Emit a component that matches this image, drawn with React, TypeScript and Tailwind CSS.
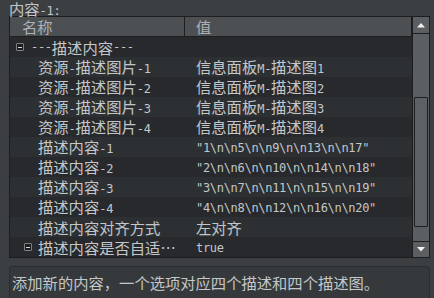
import React from 'react';

type Row = { name: string; value: string; kind?: 'group' | 'branch' };

const rows: Row[] = [
  { name: '---描述内容---', value: '', kind: 'group' },
  { name: '资源-描述图片-1', value: '信息面板M-描述图1' },
  { name: '资源-描述图片-2', value: '信息面板M-描述图2' },
  { name: '资源-描述图片-3', value: '信息面板M-描述图3' },
  { name: '资源-描述图片-4', value: '信息面板M-描述图4' },
  { name: '描述内容-1', value: '"1\\n\\n5\\n\\n9\\n\\n13\\n\\n17"' },
  { name: '描述内容-2', value: '"2\\n\\n6\\n\\n10\\n\\n14\\n\\n18"' },
  { name: '描述内容-3', value: '"3\\n\\n7\\n\\n11\\n\\n15\\n\\n19"' },
  { name: '描述内容-4', value: '"4\\n\\n8\\n\\n12\\n\\n16\\n\\n20"' },
  { name: '描述内容对齐方式', value: '左对齐' },
  { name: '描述内容是否自适…', value: 'true', kind: 'branch' },
];

// latin runs are drawn in a smaller mono face, CJK runs in Noto CJK
function Mixed({ text }: { text: string }) {
  const parts = text.match(/[\x20-\x7e]+|[^\x20-\x7e]+/g) ?? [];
  return (
    <>
      {parts.map((p, i) =>
        /^[\x20-\x7e]/.test(p) ? (
          <span key={i} className="font-['DejaVu_Sans_Mono',monospace] text-[12px] tracking-[-0.3px]">
            {p}
          </span>
        ) : (
          <span key={i} className="font-['Noto_Sans_CJK_SC',sans-serif] text-[15.3px]">
            {p}
          </span>
        )
      )}
    </>
  );
}

function MinusBox() {
  return (
    <div className="w-[8px] h-[8px] shrink-0 border border-[#7d8184] bg-[#1b1d1f] rounded-[1px] flex items-center justify-center">
      <div className="w-[4px] h-[1px] bg-[#d4d6d8]" />
    </div>
  );
}

function Arrow({ down }: { down?: boolean }) {
  return (
    <svg width="8" height="5" viewBox="0 0 8 5">
      {down ? <polygon points="0,0 8,0 4,4.5" fill="#f2f2f2" /> : <polygon points="0,4.5 8,4.5 4,0" fill="#f2f2f2" />}
    </svg>
  );
}

export default function App() {
  return (
    <div className="w-[434px] h-[298px] overflow-hidden bg-[#3c3f42] text-[#c3c7ca]">
      <div className="h-[16px] pl-[9px] leading-[16px] whitespace-nowrap">
        <Mixed text="内容-1:" />
      </div>

      <div className="ml-[9px] w-[421px] h-[242px] border border-[#1c1e20] flex">
        <div className="flex-1 flex flex-col min-w-0">
          <div className="h-[20px] flex border-b border-[#1c1e20] bg-[#4c5053] text-[#aeb2b6] leading-[19px] whitespace-nowrap">
            <div className="w-[175px] pl-[12px] border-r border-[#1c1e20]">
              <Mixed text="名称" />
            </div>
            <div className="flex-1 pl-[11px] border-r border-[#1c1e20]">
              <Mixed text="值" />
            </div>
          </div>

          <div className="flex-1 flex flex-col">
            {rows.map((r, i) => (
              <div
                key={i}
                className={`h-[20px] flex items-center leading-[20px] whitespace-nowrap ${
                  i % 2 === 1 ? 'bg-[#2d3033]' : 'bg-[#27292c]'
                }`}
              >
                <div className="w-[175px] flex items-center">
                  {r.kind === 'group' ? (
                    <>
                      <div className="ml-[6px] mr-[7px]">
                        <MinusBox />
                      </div>
                      <Mixed text={r.name} />
                    </>
                  ) : r.kind === 'branch' ? (
                    <>
                      <div className="ml-[14px] mr-[6px]">
                        <MinusBox />
                      </div>
                      <Mixed text={r.name} />
                    </>
                  ) : (
                    <div className="pl-[28px]">
                      <Mixed text={r.name} />
                    </div>
                  )}
                </div>
                <div className="flex-1 pl-[11px]">
                  <Mixed text={r.value} />
                </div>
              </div>
            ))}
          </div>
        </div>

        <div className="w-[17px] border-l border-[#1c1e20] bg-[#5b5f62] flex flex-col">
          <div className="h-[17px] border-b border-[#1c1e20] flex items-center justify-center">
            <Arrow />
          </div>
          <div className="flex-1 flex flex-col px-[1px]">
            <div className="mt-[63px] h-[130px] border border-[#1c1e20] bg-[#5d6164] rounded-[1px]" />
          </div>
          <div className="h-[16px] border-t border-[#1c1e20] flex items-center justify-center">
            <Arrow down />
          </div>
        </div>
      </div>

      <div className="mt-[8px] ml-[9px] w-[421px] h-[44px] border border-[#2a2c2f] rounded-[3px] bg-[#36393c] pl-[2px] pt-[5px] leading-[20px] whitespace-nowrap">
        <Mixed text="添加新的内容，一个选项对应四个描述和四个描述图。" />
      </div>
    </div>
  );
}
